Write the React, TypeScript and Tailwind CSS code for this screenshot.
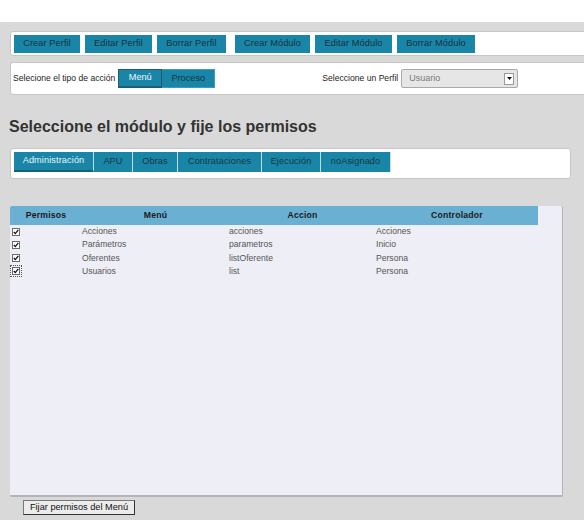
import type { ReactNode } from "react";

const topButtons = [
  { label: "Crear Perfil", w: "w-[66px]", gap: "" },
  { label: "Editar Perfil", w: "w-[67px]", gap: "ml-[5px]" },
  { label: "Borrar Perfil", w: "w-[69px]", gap: "ml-[5px]" },
  { label: "Crear Módulo", w: "w-[75px]", gap: "ml-[9px]" },
  { label: "Editar Módulo", w: "w-[77px]", gap: "ml-[5px]" },
  { label: "Borrar Módulo", w: "w-[78px]", gap: "ml-[5px]" },
];

const tabs = [
  { label: "Administración", w: "w-[80px]", active: true },
  { label: "APU", w: "w-[39px]" },
  { label: "Obras", w: "w-[45px]" },
  { label: "Contrataciones", w: "w-[84px]" },
  { label: "Ejecución", w: "w-[59px]" },
  { label: "noAsignado", w: "w-[70px]" },
];

const rows = [
  { menu: "Acciones", accion: "acciones", ctrl: "Acciones" },
  { menu: "Parámetros", accion: "parametros", ctrl: "Inicio" },
  { menu: "Oferentes", accion: "listOferente", ctrl: "Persona" },
  { menu: "Usuarios", accion: "list", ctrl: "Persona", focus: true },
];

function Panel({ className, children }: { className: string; children: ReactNode }) {
  return (
    <div className={`rounded-[3px] border border-[#c6c6c6] bg-white ${className}`}>{children}</div>
  );
}

function Check({ focus }: { focus?: boolean }) {
  return (
    <span
      className={`flex h-[10px] w-[10px] items-center justify-center ${
        focus ? "outline outline-1 outline-dotted outline-[#555]" : ""
      }`}
    >
      <svg width="8" height="8" viewBox="0 0 8 8">
        <rect x="0.5" y="0.5" width="7" height="7" fill="#fff" stroke="#6b6b6b" />
        <path d="M1.8 4 L3.3 5.6 L6.3 1.8" fill="none" stroke="#111" strokeWidth="1.3" />
      </svg>
    </span>
  );
}

export default function App() {
  return (
    <div className="h-[520px] w-[584px] overflow-hidden bg-[#d9d9d9] font-['Liberation_Sans',Arial,sans-serif] text-[#222]">
      <div className="h-[22px] bg-white" />

      <div className="flex flex-col items-start pl-[10px]">
        <Panel className="mt-[9px] flex h-[25px] w-[600px] shrink-0 items-center pl-[3px]">
          {topButtons.map((b) => (
            <button
              key={b.label}
              className={`flex h-[18px] items-center justify-center bg-[#1a86a7] text-[9.2px] tracking-[0.1px] text-[#16303b] ${b.w} ${b.gap}`}
            >
              {b.label}
            </button>
          ))}
        </Panel>

        <Panel className="mt-[6px] flex h-[33px] w-[600px] shrink-0 items-center pl-[2px]">
          <span className="text-[8.6px] text-[#1e1e1e]">Selecione el tipo de acción</span>
          <div className="ml-[3px] flex">
            <button className="flex h-[19px] w-[44px] items-center justify-center border border-b-2 border-[#1d5d73] bg-[#1a86a7] text-[9.2px] text-[#eaf6fa]">
              Menú
            </button>
            <button className="flex h-[19px] w-[53px] items-center justify-center border border-l-0 border-[#3a9cba] bg-[#1a86a7] text-[9.2px] text-[#163642]">
              Proceso
            </button>
          </div>
          <span className="ml-[107px] text-[8.6px] text-[#1e1e1e]">Seleccione un Perfil</span>
          <div className="ml-[3px] flex h-[19px] w-[117px] items-center justify-between rounded-[2px] border border-[#a9a9a9] bg-[#e6e6e6] pl-[7px] pr-[3px]">
            <span className="text-[9px] text-[#7a7a7a]">Usuario</span>
            <span className="flex h-[12px] w-[10px] items-center justify-center border border-[#9a9a9a] bg-white">
              <svg width="5" height="3" viewBox="0 0 5 3">
                <path d="M0 0 H5 L2.5 3 Z" fill="#111" />
              </svg>
            </span>
          </div>
        </Panel>

        <h1 className="-ml-[1px] mt-[22px] h-[20px] text-[16px] font-bold leading-[20px] text-[#333]">
          Seleccione el módulo y fije los permisos
        </h1>

        <Panel className="mt-[11px] h-[31px] w-[561px] pl-[3px] pt-[3px]">
          <div className="flex">
            {tabs.map((t) => (
              <div
                key={t.label}
                className={`flex h-[20px] items-center justify-center border-r border-[#c5dbe3] bg-[#1a86a7] text-[9.2px] tracking-[0.1px] ${t.w} ${
                  t.active ? "border-b-2 border-b-[#16617a] text-[#e6f4f8]" : "text-[#163642]"
                }`}
              >
                {t.label}
              </div>
            ))}
          </div>
        </Panel>

        <div className="mt-[27px] flex h-[291px] w-[574px]">
          <section className="flex h-full w-[553px] shrink-0 flex-col overflow-hidden rounded-[2px] border-b-2 border-r border-[#b4b4b4] bg-[#eeeef7]">
            <div className="grid h-[19px] w-[528px] shrink-0 grid-cols-[72px_147px_147px_162px] items-center bg-[#6ab0d3] text-[8.7px] font-bold tracking-[0.2px] text-[#1a1a1a]">
              <span className="text-center">Permisos</span>
              <span className="text-center">Menú</span>
              <span className="text-center">Accion</span>
              <span className="text-center">Controlador</span>
            </div>
            {rows.map((r) => (
              <div
                key={r.menu}
                className="grid h-[13.2px] w-[528px] shrink-0 grid-cols-[72px_147px_147px_162px] items-center text-[8.6px] text-[#555]"
              >
                <span className="pl-[1px]">
                  <Check focus={r.focus} />
                </span>
                <span>{r.menu}</span>
                <span>{r.accion}</span>
                <span>{r.ctrl}</span>
              </div>
            ))}
          </section>
          <div className="flex-1 bg-[#d9d9d9]" />
        </div>

        <button className="ml-[13px] mt-[3px] flex h-[15px] w-[112px] items-center justify-center border border-[#777] border-b-[#333] border-r-[#333] bg-[#ececec] text-[9.2px] text-[#111]">
          Fijar permisos del Menú
        </button>
      </div>
    </div>
  );
}
